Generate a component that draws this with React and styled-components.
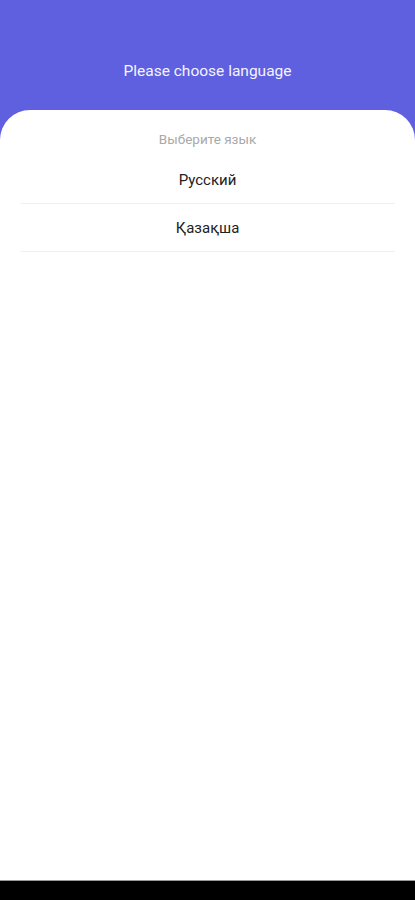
import React from "react";
import styled, { createGlobalStyle } from "styled-components";

const GlobalStyle = createGlobalStyle`
  html, body {
    margin: 0;
    padding: 0;
    background: #5f60e0;
  }
  body {
    font-family: Roboto, "Noto Sans", "Liberation Sans", sans-serif;
  }
`;

const Screen = styled.div`
  display: flex;
  flex-direction: column;
  height: 900px;
  background: #5f60e0;
`;

const Header = styled.header`
  height: 110px;
  display: flex;
  align-items: flex-start;
  justify-content: center;
  box-sizing: border-box;
  padding-top: 61px;
`;

const Title = styled.h1`
  margin: 0;
  font-size: 15.5px;
  line-height: 20px;
  font-weight: 400;
  color: #f4f4ff;
`;

const Sheet = styled.main`
  flex: 1;
  background: #fff;
  border-radius: 30px 30px 0 0;
  padding: 0 20px;
  display: flex;
  flex-direction: column;
`;

const Hint = styled.p`
  margin: 0;
  padding: 20px 0 8px;
  font-size: 13.5px;
  line-height: 18px;
  text-align: center;
  color: #a9a9a9;
`;

const LangList = styled.ul`
  list-style: none;
  margin: 0;
  padding: 0;
`;

const LangItem = styled.li`
  height: 47px;
  display: flex;
  align-items: center;
  justify-content: center;
  border-bottom: 1px solid #f0f0f0;
  font-size: 15px;
  color: #222;
  cursor: pointer;
`;

const NavBar = styled.div`
  height: 20px;
  background: #000;
  border-top: 1px solid #9a9a9a;
  box-sizing: border-box;
`;

const languages = ["Русский", "Қазақша"];

export default function App() {
  return (
    <>
      <GlobalStyle />
      <Screen>
        <Header>
          <Title>Please choose language</Title>
        </Header>
        <Sheet>
          <Hint>Выберите язык</Hint>
          <LangList>
            {languages.map((l) => (
              <LangItem key={l}>{l}</LangItem>
            ))}
          </LangList>
        </Sheet>
        <NavBar />
      </Screen>
    </>
  );
}
